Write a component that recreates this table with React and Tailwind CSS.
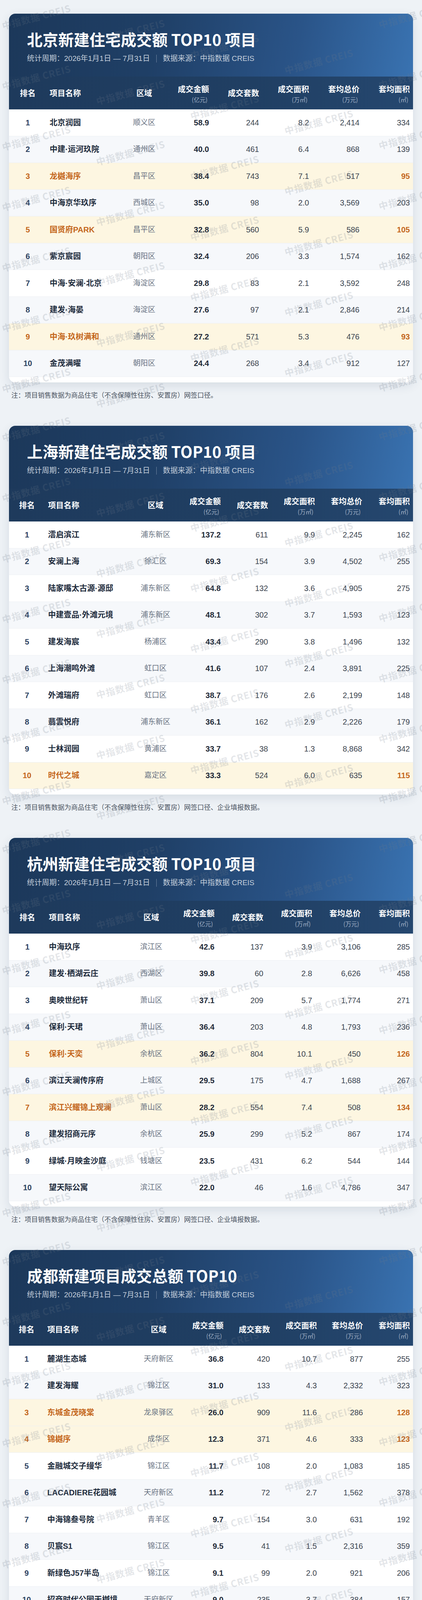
import React from "react";

const NOTE_A = "注：项目销售数据为商品住宅（不含保障性住房、安置房）网签口径。";
const NOTE_B = "注：项目销售数据为商品住宅（不含保障性住房、安置房）网签口径、企业填报数据。";

const TABLES = [
  {
    title: "北京新建住宅成交额 TOP10 项目",
    cols: "grid grid-cols-[96px_200px_100px_124px_128px_128px_129px_129px]",
    note: NOTE_A,
    rows: [
      ["1", "北京润园", "顺义区", "58.9", "244", "8.2", "2,414", "334", false],
      ["2", "中建·运河玖院", "通州区", "40.0", "461", "6.4", "868", "139", false],
      ["3", "龙樾海序", "昌平区", "38.4", "743", "7.1", "517", "95", true],
      ["4", "中海京华玖序", "西城区", "35.0", "98", "2.0", "3,569", "203", false],
      ["5", "国贤府PARK", "昌平区", "32.8", "560", "5.9", "586", "105", true],
      ["6", "紫京宸园", "朝阳区", "32.4", "206", "3.3", "1,574", "162", false],
      ["7", "中海·安澜·北京", "海淀区", "29.8", "83", "2.1", "3,592", "248", false],
      ["8", "建发·海晏", "海淀区", "27.6", "97", "2.1", "2,846", "214", false],
      ["9", "中海·玖树满和", "通州区", "27.2", "571", "5.3", "476", "93", true],
      ["10", "金茂满曜", "朝阳区", "24.4", "268", "3.4", "912", "127", false],
    ],
  },
  {
    title: "上海新建住宅成交额 TOP10 项目",
    cols: "grid grid-cols-[92px_228px_110px_120px_121px_120px_121px_122px]",
    note: NOTE_B,
    rows: [
      ["1", "澐启滨江", "浦东新区", "137.2", "611", "9.9", "2,245", "162", false],
      ["2", "安澜上海", "徐汇区", "69.3", "154", "3.9", "4,502", "255", false],
      ["3", "陆家嘴太古源·源邸", "浦东新区", "64.8", "132", "3.6", "4,905", "275", false],
      ["4", "中建壹品·外滩元境", "浦东新区", "48.1", "302", "3.7", "1,593", "123", false],
      ["5", "建发海宸", "杨浦区", "43.4", "290", "3.8", "1,496", "132", false],
      ["6", "上海潮鸣外滩", "虹口区", "41.6", "107", "2.4", "3,891", "225", false],
      ["7", "外滩瑞府", "虹口区", "38.7", "176", "2.6", "2,199", "148", false],
      ["8", "翡雲悦府", "浦东新区", "36.1", "162", "2.9", "2,226", "179", false],
      ["9", "士林润园", "黄浦区", "33.7", "38", "1.3", "8,868", "342", false],
      ["10", "时代之城", "嘉定区", "33.3", "524", "6.0", "635", "115", true],
    ],
  },
  {
    title: "杭州新建住宅成交额 TOP10 项目",
    cols: "grid grid-cols-[94px_218px_104px_118px_125px_125px_124px_126px]",
    note: NOTE_B,
    rows: [
      ["1", "中海玖序", "滨江区", "42.6", "137", "3.9", "3,106", "285", false],
      ["2", "建发·栖湖云庄", "西湖区", "39.8", "60", "2.8", "6,626", "458", false],
      ["3", "奥映世纪轩", "萧山区", "37.1", "209", "5.7", "1,774", "271", false],
      ["4", "保利·天珺", "萧山区", "36.4", "203", "4.8", "1,793", "236", false],
      ["5", "保利·天奕", "余杭区", "36.2", "804", "10.1", "450", "126", true],
      ["6", "滨江天澜传序府", "上城区", "29.5", "175", "4.7", "1,688", "267", false],
      ["7", "滨江兴耀锦上观澜", "萧山区", "28.2", "554", "7.4", "508", "134", true],
      ["8", "建发招商元序", "余杭区", "25.9", "299", "5.2", "867", "174", false],
      ["9", "绿城·月映金沙庭", "钱塘区", "23.5", "431", "6.2", "544", "144", false],
      ["10", "望天际公寓", "滨江区", "22.0", "46", "1.6", "4,786", "347", false],
    ],
  },
  {
    title: "成都新建项目成交总额 TOP10",
    cols: "grid grid-cols-[90px_233px_120px_114px_119px_120px_118px_120px]",
    note: NOTE_A,
    rows: [
      ["1", "麓湖生态城", "天府新区", "36.8", "420", "10.7", "877", "255", false],
      ["2", "建发海耀", "锦江区", "31.0", "133", "4.3", "2,332", "323", false],
      ["3", "东城金茂晓棠", "龙泉驿区", "26.0", "909", "11.6", "286", "128", true],
      ["4", "锦樾序", "成华区", "12.3", "371", "4.6", "333", "123", true],
      ["5", "金融城交子缦华", "锦江区", "11.7", "108", "2.0", "1,083", "185", false],
      ["6", "LACADIERE花园城", "天府新区", "11.2", "72", "2.7", "1,562", "378", false],
      ["7", "中海锦叁号院", "青羊区", "9.7", "154", "3.0", "631", "192", false],
      ["8", "贝宸S1", "锦江区", "9.5", "41", "1.5", "2,316", "359", false],
      ["9", "新绿色J57半岛", "锦江区", "9.1", "99", "2.0", "921", "206", false],
      ["10", "招商时代公园天樾境", "天府新区", "9.0", "235", "3.7", "384", "157", false],
    ],
  },
];

function Watermark({ height, last }) {
  const items = [];
  const maxY = last ? height - 45 : height - 20;
  for (let c = 0; c < 5; c++) {
    for (let r = -1; r <= 8; r++) {
      const x = 93 + 241 * c;
      const y = 43 + 38 * c + 155 * r;
      if (y < 20 || y > maxY) continue;
      items.push(
        <span
          key={c + "-" + r}
          className="absolute whitespace-nowrap text-[24px] leading-[30px] font-semibold tracking-[1px] text-[#6f7b8a]/20 -translate-x-1/2 -translate-y-1/2 -rotate-[15deg] font-['Noto_Sans_CJK_SC','Noto_Sans',sans-serif]"
          style={{ left: x, top: y }}
        >
          中指数据 CREIS
        </span>
      );
    }
  }
  return <div className="pointer-events-none absolute inset-0 z-10 overflow-hidden">{items}</div>;
}

function HeadCell({ label, sub, align }) {
  const alignCls =
    align === "center" ? "items-center" : align === "left" ? "items-start pl-2" : "items-end pr-2";
  return (
    <div className={"flex h-[84px] flex-col overflow-hidden " + alignCls + (sub ? " justify-start pt-[19px]" : " justify-center")}>
      <span className="block h-[26px] text-[20px] leading-[26px] font-bold text-white">{label}</span>
      {sub && <span className="mt-[5px] block h-[18px] text-[15px] leading-[18px] text-[#a3b3c8] pr-[4px]">{sub}</span>}
    </div>
  );
}

function Row({ cols, row, index }) {
  const [rank, name, region, amount, count, area, total, avg, hl] = row;
  const bg = hl ? "bg-[#fdf6e1]" : index % 2 === 1 ? "bg-[#f6f8fb]" : "bg-white";
  const orange = "text-[#c4661c]";
  return (
    <div className={cols + " h-[68.5px] items-center overflow-hidden border-b border-[#edf0f4] leading-[28px] " + bg}>
      <div className={"text-center text-[20px] font-bold " + (hl ? orange : "text-[#2e4362]")}>{rank}</div>
      <div className={"whitespace-nowrap pl-2 text-[20px] font-bold " + (hl ? orange : "text-[#1e2b3c]")}>{name}</div>
      <div className="whitespace-nowrap text-center text-[19px] text-[#667080]">{region}</div>
      <div className="pr-2 text-right text-[20px] font-bold text-[#1f2937]">{amount}</div>
      <div className="pr-2 text-right text-[20px] text-[#3c4550]">{count}</div>
      <div className="pr-2 text-right text-[20px] text-[#3c4550]">{area}</div>
      <div className="pr-2 text-right text-[20px] text-[#3c4550]">{total}</div>
      <div className={"pr-2 text-right text-[20px] " + (hl ? "font-bold " + orange : "text-[#3c4550]")}>{avg}</div>
    </div>
  );
}

function Card({ t }) {
  return (
    <div className="h-[944px] overflow-hidden rounded-[16px] bg-white shadow-[0_8px_26px_rgba(30,55,90,0.12)]">
      <div className="bg-[linear-gradient(100deg,#1c385a_0%,#1f3f66_35%,#2a5488_70%,#3a74b3_100%)]">
        <div className="h-[161px] overflow-hidden pl-[46px] pt-[40px]">
          <h2 className="h-[50px] whitespace-nowrap text-[40px] leading-[50px] font-bold text-white font-['Noto_Sans_CJK_SC','Noto_Sans',sans-serif]">
            {t.title}
          </h2>
          <div className="mt-[12px] flex h-[26px] items-center whitespace-nowrap text-[19px] leading-[26px] text-[#c3cedb] font-['Liberation_Sans','Noto_Sans_CJK_SC',sans-serif]">
            <span>统计周期：2026年1月1日 — 7月31日</span>
            <span className="mx-[16px] inline-block h-[20px] w-px bg-[#c3cedb]/50" />
            <span>数据来源：中指数据 CREIS</span>
          </div>
        </div>
        <div className={t.cols + " h-[84px] bg-[linear-gradient(90deg,#1e3a5c_0%,#203f63_60%,#25476f_100%)] font-['Noto_Sans_CJK_SC','Noto_Sans',sans-serif]"}>
          <HeadCell label="排名" align="center" />
          <HeadCell label="项目名称" align="left" />
          <HeadCell label="区域" align="center" />
          <HeadCell label="成交金额" sub="(亿元)" align="right" />
          <HeadCell label="成交套数" align="right" />
          <HeadCell label="成交面积" sub="(万㎡)" align="right" />
          <HeadCell label="套均总价" sub="(万元)" align="right" />
          <HeadCell label="套均面积" sub="(㎡)" align="right" />
        </div>
      </div>
      <div className="h-[699px] overflow-hidden font-['Liberation_Sans','Noto_Sans_CJK_SC',sans-serif]">
        {t.rows.map((r, i) => (
          <Row key={i} cols={t.cols} row={r} index={i} />
        ))}
      </div>
    </div>
  );
}

function Section({ t, last }) {
  return (
    <section className={"relative overflow-hidden px-[23px] pt-[35px] " + (last ? "h-[1156px]" : "h-[1055px]")}>
      <div className="relative z-0">
        <Card t={t} />
        <p className="mt-[20px] h-[24px] whitespace-nowrap pl-[6px] text-[17px] leading-[24px] text-[#4a5361] font-['Noto_Sans_CJK_SC',sans-serif]">
          {t.note}
        </p>
        {last && (
          <div className="mt-[61px] flex h-[61px] items-center gap-[24px] font-['Noto_Sans_CJK_SC','Noto_Sans',sans-serif]">
            <div className="flex h-[61px] w-[150px] shrink-0 items-center justify-center rounded-[12px] bg-[linear-gradient(135deg,#3a5aa6_0%,#4765a8_100%)] shadow-[0_2px_6px_rgba(40,70,140,0.25)]">
              <span className="text-[22px] leading-[28px] font-bold text-white font-['Open_Sans','Noto_Sans',sans-serif]">CI BUDDY</span>
            </div>
            <div className="flex flex-col">
              <span className="h-[28px] whitespace-nowrap text-[20px] leading-[28px] font-bold text-[#1f2937]">内容由「CI Buddy 地产工作好伙伴」辅助生成</span>
              <span className="mt-[4px] h-[24px] whitespace-nowrap text-[17px] leading-[24px] text-[#8b95a3]">
                实时对接中指数据库，快速获取市场数据、趋势分析与可视化洞察，让你的地产决策更高效。
              </span>
            </div>
          </div>
        )}
      </div>
      <Watermark height={last ? 1156 : 1055} last={last} />
    </section>
  );
}

export default function App() {
  return (
    <div className="w-full overflow-hidden bg-[#eef2f6]">
      {TABLES.map((t, i) => (
        <Section key={i} t={t} last={i === TABLES.length - 1} />
      ))}
    </div>
  );
}
